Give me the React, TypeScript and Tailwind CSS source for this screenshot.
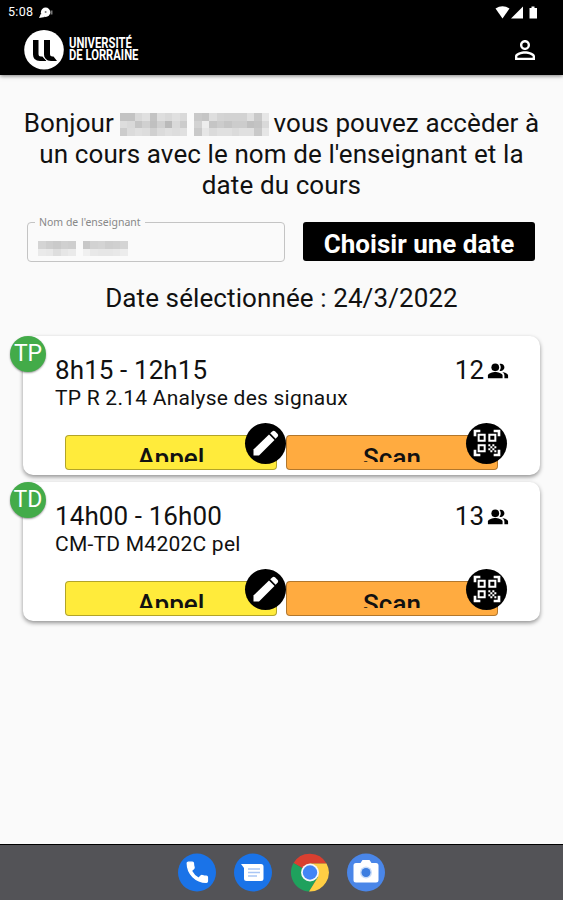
import { MdPersonOutline, MdQrCodeScanner } from "react-icons/md";

// Define a type for a course object
type Course = {
  kind: string;
  hours: string;
  title: string;
  students: number;
};

const courses: Course[] = [
  { kind: "TP", hours: "8h15 - 12h15", title: "TP R 2.14 Analyse des signaux", students: 12 },
  { kind: "TD", hours: "14h00 - 16h00", title: "CM-TD M4202C pel", students: 13 },
];

// grey levels of the masked name, one row of tiles per array
const firstName = [
  [190, 190, 214, 222, 190, 220, 214, 222, 214],
  [218, 214, 192, 204, 186, 204, 180, 214, 200],
  [200, 216, 222, 218, 204, 216, 222, 218, 222],
];
const lastName = [
  [196, 192, 220, 208, 206, 206, 206, 222, 196, 228],
  [206, 236, 192, 200, 192, 200, 200, 186, 190, 214],
  [196, 228, 216, 222, 222, 216, 222, 222, 196, 228],
];
const fieldFirst = [
  [212, 206, 202, 208, 206],
  [234, 232, 222, 230, 234],
];
const fieldLast = [
  [200, 210, 212, 206, 208, 212],
  [240, 232, 230, 230, 232, 236],
];

function Mosaic({ rows, tile }: { rows: number[][]; tile: string }) {
  return (
    <span className="inline-flex flex-col">
      {rows.map((row, y) => (
        <span key={y} className="flex">
          {row.map((level, x) => (
            <span key={x} className={tile} style={{ backgroundColor: `rgb(${level},${level},${level})` }} />
          ))}
        </span>
      ))}
    </span>
  );
}

function PeopleIcon() {
  return (
    <svg width="22" height="22" viewBox="0 0 24 24" fill="black">
      <circle cx="9" cy="8" r="4.2" />
      <path d="M9 13c-2.67 0-8 1.34-8 4v3h16v-3c0-2.66-5.33-4-8-4z" />
      <path d="M15 12c2.21 0 4-1.79 4-4s-1.79-4-4-4c-.47 0-.91.1-1.33.24C14.5 5.27 15 6.58 15 8s-.5 2.73-1.33 3.76c.42.14.86.24 1.33.24z" />
      <path d="M16.67 13.13C18.04 14.06 19 15.32 19 17v3h4v-3c0-2.18-3.57-3.47-6.33-3.87z" />
    </svg>
  );
}

function PencilIcon() {
  return (
    <svg width="26" height="26" viewBox="0 0 26 26" fill="white">
      <path d="M0.5 19.5 L16 4.5 L21.5 10 L6 25.5 H0.5 Z" />
      <path d="M17.2 3.3 L19.5 1.2 Q20.7 0.3 22 1.3 L24.7 4 Q25.7 5.3 24.7 6.6 L22.6 8.8 Z" />
    </svg>
  );
}

function Header() {
  return (
    <header className="h-[75px] shrink-0 bg-black text-white shadow-[0_1px_4px_rgba(0,0,0,0.5)]">
      <div className="flex h-[25px] items-center justify-between pl-[8px] pr-[25px]">
        <div className="flex items-center gap-[6px]">
          <span className="text-[12.5px] leading-none tracking-[0.3px]">5:08</span>
          <svg width="14" height="12" viewBox="0 0 14 12" fill="white">
            <circle cx="6.6" cy="5.3" r="4.7" />
            <path d="M0 11 L2 6.5 L6 10 Z" />
            <circle cx="6.6" cy="5" r="1" fill="#777" />
            <path d="M11.5 3.5h2v4h-2z" fill="#777" />
          </svg>
        </div>
        <svg width="43" height="13" viewBox="0 0 43 13" fill="white">
          <path d="M0.5 2.5 Q7.5 -2 14.5 2.5 L7.5 12.5 Z" />
          <path d="M28 0.5 V12.5 H16 Z" />
          <path d="M34.5 2 H36.5 V0.5 H39.5 V2 H42 V12.5 H34.5 Z" />
        </svg>
      </div>
      <div className="flex h-[50px] items-center justify-between pl-[24px] pr-[23px]">
        <div className="flex items-center">
          <svg width="40" height="40" viewBox="0 0 40 40">
            <circle cx="20" cy="19.8" r="19.8" fill="white" />
            <path d="M9 10 H14.5 V24 Q14.500 26.500 17 26.500 H18.500 L22.500 31 H16 Q9 31 9 24.500 Z" fill="black" />
            <path d="M20 10 H26 V24 Q26 26.500 28.500 26.500 H29.500 L33 31 H27 Q20 31 20 24.500 Z" fill="black" />
            <path d="M19.3 10 V26.500 L23 31" stroke="white" strokeWidth="0.8" fill="none" />
          </svg>
          <div className="ml-[5px] w-[93px] origin-left scale-x-[0.775] whitespace-nowrap text-[14.5px] font-bold leading-[12.5px]">
            <div>UNIVERSITÉ</div>
            <div>DE LORRAINE</div>
          </div>
        </div>
        <MdPersonOutline className="h-[30px] w-[30px]" />
      </div>
    </header>
  );
}

function ActionButton({ label, color, icon }: { label: string; color: string; icon: React.ReactNode }) {
  return (
    <div className={`relative h-[35px] w-[212px] rounded-[4px] border border-black/30 ${color}`}>
      <div className="mt-[8px] h-[18px] overflow-hidden text-center text-[26px] font-medium leading-[29px]">
        {label}
      </div>
      <div className="absolute -right-[10px] -top-[13px] flex size-[41px] items-center justify-center rounded-full bg-black text-white">
        {icon}
      </div>
    </div>
  );
}

function CourseCard({ course }: { course: Course }) {
  return (
    <section className="relative h-[139px] rounded-[10px] bg-white pl-[32px] pr-[31px] pt-[19px] shadow-[0_2px_4px_rgba(0,0,0,0.42)]">
      <div className="absolute -left-[13px] top-0 flex size-[36px] items-center justify-center rounded-full bg-[#43ab49] pb-px text-[23px] leading-none text-white shadow-[0_1px_2px_rgba(0,0,0,0.4)]">
        {course.kind}
      </div>
      <div className="flex items-center justify-between text-[26px] leading-[31px]">
        <span className="tracking-[0.1px]">{course.hours}</span>
        <span className="flex items-center gap-[3px]">
          {course.students}
          <PeopleIcon />
        </span>
      </div>
      <p className="text-[21px] leading-[25px] tracking-[0.24px]">{course.title}</p>
      <div className="ml-[10px] mt-[23.5px] flex gap-[9px]">
        <ActionButton label="Appel" color="bg-[#ffeb3b]" icon={<PencilIcon />} />
        <ActionButton label="Scan" color="bg-[#ffab40]" icon={<MdQrCodeScanner className="size-[32px]" />} />
      </div>
    </section>
  );
}

function Dock() {
  return (
    <footer className="flex h-[56px] shrink-0 justify-center gap-[18.5px] border-t border-black bg-[#535357] pt-[8px]">
      <svg width="38" height="39" viewBox="0 0 38 39">
        <circle cx="19" cy="19.5" r="19" fill="#1a73e8" />
        <path
          transform="translate(5.9 5.8) scale(1.12)"
          fill="white"
          stroke="white"
          strokeWidth="1.2"
          strokeLinejoin="round"
          d="M6.62 10.79c1.44 2.83 3.76 5.14 6.59 6.59l2.2-2.2c.27-.27.67-.36 1.02-.24 1.12.37 2.33.57 3.57.57.55 0 1 .45 1 1V20c0 .55-.45 1-1 1-9.39 0-17-7.61-17-17 0-.55.45-1 1-1h3.5c.55 0 1 .45 1 1 0 1.25.2 2.45.57 3.57.11.35.03.74-.25 1.02l-2.2 2.2z"
        />
      </svg>
      <svg width="38" height="39" viewBox="0 0 38 39">
        <circle cx="19" cy="19.5" r="19" fill="#1a73e8" />
        <path d="M7 11 H27 Q29.5 11 29.5 13.5 V25.5 Q29.5 28 27 28 H12.5 Q10 28 10 25.5 V15 Z" fill="white" />
        <path d="M14 16h12M14 19.5h12M14 23h9" stroke="#a9c6f5" strokeWidth="1.6" />
      </svg>
      <svg width="38" height="39" viewBox="0 0 38 39">
        <path d="M2.5 10 A19 19 0 0 1 35.5 10.5 H19 V19.5 Z" fill="#d93f30" />
        <path d="M2.5 10 A19 19 0 0 0 18 38.5 L27 24 L19 19.5 Z" fill="#1fa15d" />
        <path d="M19 10.5 H35.5 A19 19 0 0 1 18 38.5 L27 24 Z" fill="#ffce44" />
        <circle cx="19" cy="19.5" r="9" fill="#f4f6f8" />
        <circle cx="19" cy="19.5" r="7.2" fill="#4285f4" />
      </svg>
      <svg width="38" height="39" viewBox="0 0 38 39">
        <circle cx="19" cy="19.5" r="19" fill="#4a86e8" />
        <path d="M9 10 H13.5 L15.5 7 H22.5 L24.5 10 H29 Q31.5 10 31.5 12.5 V27 Q31.5 29.5 29 29.5 H9 Q6.5 29.5 6.5 27 V12.5 Q6.5 10 9 10 Z" fill="white" />
        <circle cx="19" cy="19.5" r="6" fill="#c9dcf8" />
        <circle cx="19" cy="19.5" r="4.5" fill="#3c7de0" />
      </svg>
    </footer>
  );
}

function App() {
  return (
    <div className="flex h-[900px] w-[563px] flex-col overflow-hidden bg-[#fafafa] font-['Roboto',sans-serif] text-[#111]">
      <Header />
      <main className="flex-1">
        <h1 className="mt-[33px] text-center text-[26px] leading-[31px] tracking-[0.1px]">
          <div className="flex h-[31px] justify-center">
            Bonjour
            <span className="ml-[6px] mr-[4px] flex gap-[7px] pt-[5px] opacity-90">
              <Mosaic rows={firstName} tile="h-[7.5px] w-[7.5px]" />
              <Mosaic rows={lastName} tile="h-[7.5px] w-[7.5px]" />
            </span>
            vous pouvez accèder à
          </div>
          <div>un cours avec le nom de l'enseignant et la</div>
          <div>date du cours</div>
        </h1>

        <div className="mt-[21px] flex gap-[18px] pl-[27px]">
          <div className="relative h-[40px] w-[258px] rounded-[4px] border border-[#c4c4c4]">
            <span className="absolute -top-[8px] left-[7px] bg-[#fafafa] px-[4px] font-['Noto_Sans',sans-serif] text-[10.5px] leading-[14px] text-[#888]">
              Nom de l'enseignant
            </span>
            <div className="flex gap-[7px] pl-[10px] pt-[18px]">
              <Mosaic rows={fieldFirst} tile="h-[7.5px] w-[7.5px]" />
              <Mosaic rows={fieldLast} tile="h-[7.5px] w-[7.5px]" />
            </div>
          </div>
          <button className="h-[39px] w-[232px] rounded-[3px] bg-black pt-[5px] text-[26px] font-bold leading-[31px] text-white">
            Choisir une date
          </button>
        </div>

        <p className="mt-[21px] text-center text-[26px] leading-[31px] tracking-[0.1px]">
          Date sélectionnée : 24/3/2022
        </p>

        <div className="ml-[23px] mt-[22px] flex w-[517px] flex-col gap-[7px]">
          {courses.map((course) => (
            <CourseCard key={course.kind} course={course} />
          ))}
        </div>
      </main>
      <Dock />
    </div>
  );
}

export default App;
